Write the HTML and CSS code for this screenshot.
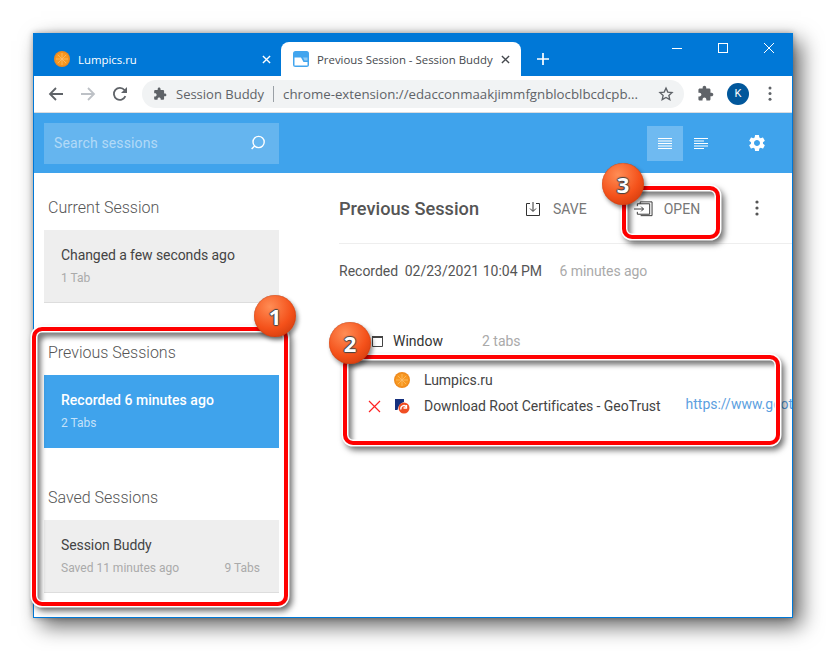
FILE: index.html
```html
<!DOCTYPE html>
<html lang="en">
<head>
    <meta charset="UTF-8">
    <title>Previous Session - Session Buddy</title>
    <link rel="stylesheet" href="styles.css">
</head>
<body>

<svg class="defs" width="0" height="0">
    <symbol id="orange" viewBox="0 0 16 16">
        <circle cx="8" cy="8" r="8" fill="#ee8a1e"/>
        <circle cx="8" cy="8" r="6.600" fill="#f8981f"/>
        <path d="M8 2v12M2 8h12M3.800 3.800l8.400 8.400M12.200 3.800l-8.400 8.400" stroke="#fcbe6c" stroke-width=".8"/>
    </symbol>
    <symbol id="puzzle" viewBox="0 0 24 24">
        <path d="M20.5 11H19V7c0-1.1-.9-2-2-2h-4V3.5C13 2.12 11.88 1 10.5 1S8 2.12 8 3.5V5H4c-1.1 0-1.99.9-1.99 2v3.8H3.5c1.49 0 2.7 1.21 2.7 2.7s-1.21 2.7-2.7 2.7H2V20c0 1.1.9 2 2 2h3.8v-1.5c0-1.49 1.21-2.7 2.7-2.7 1.49 0 2.7 1.21 2.7 2.7V22H17c1.1 0 2-.9 2-2v-4h1.5c1.38 0 2.5-1.12 2.5-2.5S21.88 11 20.5 11z"/>
    </symbol>
    <symbol id="dots" viewBox="0 0 4 16">
        <circle cx="2" cy="2" r="1.6"/><circle cx="2" cy="8" r="1.6"/><circle cx="2" cy="14" r="1.6"/>
    </symbol>
</svg>

<div class="window">
    <div class="tabstrip">
        <div class="tab">
            <svg class="favicon"><use href="#orange"/></svg>
            <span class="tab-title">Lumpics.ru</span>
            <svg class="tab-x" viewBox="0 0 10 10"><path d="M1 1l8 8M9 1l-8 8" stroke="#fff" stroke-width="1.5"/></svg>
        </div>
        <div class="tab active">
            <svg class="favicon" viewBox="0 0 16 16">
                <rect width="16" height="16" rx="2.500" fill="#42a5ee"/>
                <path d="M1.500 6.500h6.500l2.500 4.500h4v3.500h-13z" fill="#fff"/>
                <path d="M10 6.500h4.500v3h-3z" fill="#8fcbf5"/>
            </svg>
            <span class="tab-title">Previous Session - Session Buddy</span>
            <svg class="tab-x" viewBox="0 0 10 10"><path d="M1 1l8 8M9 1l-8 8" stroke="#45494e" stroke-width="1.5"/></svg>
        </div>
        <svg class="newtab" viewBox="0 0 12 12"><path d="M6 0v12M0 6h12" stroke="#fff" stroke-width="1.7"/></svg>
        <div class="caption">
            <svg viewBox="0 0 46 30"><path d="M18 15.500h10" stroke="#fff"/></svg>
            <svg viewBox="0 0 46 30"><rect x="18.500" y="10.500" width="9" height="9" fill="none" stroke="#fff"/></svg>
            <svg viewBox="0 0 46 30"><path d="M18 10l10 10M28 10l-10 10" stroke="#fff"/></svg>
        </div>
    </div>

    <div class="toolbar">
        <svg class="nav" viewBox="0 0 16 16"><path d="M15 8H2M8 2L2 8l6 6" fill="none" stroke="#5f6368" stroke-width="1.8"/></svg>
        <svg class="nav" viewBox="0 0 16 16"><path d="M1 8h13M8 2l6 6-6 6" fill="none" stroke="#bdc1c6" stroke-width="1.8"/></svg>
        <svg class="nav" viewBox="0 0 16 16"><path d="M13.400 10.200A6 6 0 1 1 12.500 4L14 5.500" fill="none" stroke="#5f6368" stroke-width="1.8"/><path d="M15 1v6H9z" fill="#5f6368"/></svg>
        <div class="omnibox">
            <svg class="omni-puzzle"><use href="#puzzle"/></svg>
            <span class="omni-name">Session Buddy</span>
            <span class="omni-sep"></span>
            <span class="omni-url">chrome-extension://edacconmaakjimmfgnblocblbcdcpb...</span>
            <svg class="omni-star" viewBox="0 0 24 24"><path d="M12 3.200l2.700 5.900 6.400.7-4.800 4.300 1.400 6.400L12 17.200l-5.700 3.300 1.400-6.400-4.800-4.300 6.400-.7z" fill="none" stroke="#5f6368" stroke-width="2"/></svg>
        </div>
        <svg class="tool-puzzle"><use href="#puzzle"/></svg>
        <div class="avatar">K</div>
        <svg class="tool-dots"><use href="#dots"/></svg>
    </div>

    <header class="app-header">
        <div class="search">
            <span class="search-text">Search sessions</span>
            <svg class="search-icon" viewBox="0 0 16 16"><circle cx="8.600" cy="7" r="5.600" fill="none" stroke="#fff" stroke-width="1.400"/><path d="M4.600 11L1.600 14" stroke="#fff" stroke-width="1.400"/></svg>
        </div>
        <div class="view-btn on">
            <svg viewBox="0 0 14 12"><path d="M0 1.500h14M0 4h14M0 6.500h14M0 9h14M0 11.500h14" stroke="#fff"/></svg>
        </div>
        <div class="view-btn">
            <svg viewBox="0 0 14 12"><path d="M0 1.500h14M0 4h10M0 6.500h14M0 9h14M0 11.500h10" stroke="#fff"/></svg>
        </div>
        <svg class="gear" viewBox="0 0 24 24"><path fill="#fff" d="M19.14 12.94c.04-.3.06-.61.06-.94 0-.32-.02-.64-.07-.94l2.03-1.58c.18-.14.23-.41.12-.61l-1.92-3.32c-.12-.22-.37-.29-.59-.22l-2.39.96c-.5-.38-1.03-.7-1.62-.94l-.36-2.54c-.04-.24-.24-.41-.48-.41h-3.84c-.24 0-.43.17-.47.41l-.36 2.54c-.59.24-1.13.57-1.62.94l-2.39-.96c-.22-.08-.47 0-.59.22L2.74 8.87c-.12.21-.08.47.12.61l2.03 1.58c-.05.3-.09.63-.09.94s.02.64.07.94l-2.03 1.58c-.18.14-.23.41-.12.61l1.92 3.32c.12.22.37.29.59.22l2.39-.96c.5.38 1.03.7 1.62.94l.36 2.54c.05.24.24.41.48.41h3.84c.24 0 .44-.17.47-.41l.36-2.54c.59-.24 1.13-.56 1.62-.94l2.39.96c.22.08.47 0 .59-.22l1.92-3.32c.12-.22.07-.47-.12-.61l-2.01-1.58zM12 15.600c-1.98 0-3.6-1.62-3.6-3.6s1.62-3.6 3.6-3.6 3.6 1.62 3.6 3.6-1.62 3.6-3.6 3.6z"/></svg>
    </header>

    <div class="app-body">
        <aside class="sidebar">
            <h3 class="side-title">Current Session</h3>
            <div class="card">
                <div class="card-name">Changed a few seconds ago</div>
                <div class="card-meta"><span>1 Tab</span></div>
            </div>
            <h3 class="side-title">Previous Sessions</h3>
            <div class="card selected">
                <div class="card-name">Recorded 6 minutes ago</div>
                <div class="card-meta"><span>2 Tabs</span></div>
            </div>
            <h3 class="side-title">Saved Sessions</h3>
            <div class="card">
                <div class="card-name">Session Buddy</div>
                <div class="card-meta"><span>Saved 11 minutes ago</span><span>9 Tabs</span></div>
            </div>
        </aside>

        <main class="main">
            <div class="main-head">
                <h2 class="main-title">Previous Session</h2>
                <div class="action save">
                    <svg viewBox="0 0 16 16"><path d="M5 2.500H1.500v12h13v-12H11M8 1v9M5 7.500L8 10.500l3-3" fill="none" stroke="#333"/></svg>
                    <span>SAVE</span>
                </div>
                <div class="action open">
                    <svg viewBox="0 0 20 16"><path d="M3.500 5V2.500h13v11h-13V11M6.500 2.500V.5h12.500v14.500H7M0 8h10M7.500 5.500L10 8l-2.500 2.500" fill="none" stroke="#333"/></svg>
                    <span>OPEN</span>
                </div>
                <svg class="main-dots"><use href="#dots"/></svg>
            </div>
            <div class="recorded">
                <span class="rec-label">Recorded</span>
                <span class="rec-date">02/23/2021 10:04 PM</span>
                <span class="rec-ago">6 minutes ago</span>
            </div>
            <div class="win-row">
                <svg class="win-icon" viewBox="0 0 11 11"><path d="M.5 1h10v9.500H.5z" fill="none" stroke="#444"/><path d="M0 1h11" stroke="#444" stroke-width="2"/></svg>
                <span class="win-name">Window</span>
                <span class="win-count">2 tabs</span>
            </div>
            <div class="tab-row">
                <span class="tab-del"></span>
                <svg class="row-icon"><use href="#orange"/></svg>
                <span class="row-title">Lumpics.ru</span>
            </div>
            <div class="tab-row">
                <svg class="tab-del" viewBox="0 0 13 13"><path d="M1 1l11 11M12 1L1 12" stroke="#f22" stroke-width="1.200"/></svg>
                <svg class="row-icon" viewBox="0 0 16 16">
                    <path d="M1 1h9v3Q5 5 3.500 12H1z" fill="#16307e"/>
                    <circle cx="10" cy="10" r="5.500" fill="#f04e23"/>
                    <path d="M7 11.500a3 3 0 0 1 5-3M12.500 7v3h-3" fill="none" stroke="#fff" stroke-width="1.300"/>
                </svg>
                <span class="row-title">Download Root Certificates - GeoTrust</span>
                <span class="row-url">https://www.geot</span>
            </div>
        </main>
    </div>
</div>

<!-- red callouts drawn over the screenshot -->
<div class="mark mark-1"></div>
<div class="mark mark-2"></div>
<div class="mark mark-3"></div>
<div class="badge badge-1">1</div>
<div class="badge badge-2">2</div>
<div class="badge badge-3">3</div>

</body>
</html>
```

FILE: styles.css
```css
* {
    margin: 0;
    padding: 0;
    box-sizing: border-box;
}

html, body {
    height: 651px;
    overflow: hidden;
}

body {
    background: #fff;
    padding: 33px 33px 33px 33px;
    position: relative;
    font-family: Roboto, sans-serif;
}

.defs {
    position: absolute;
}

svg {
    display: block;
    flex: none;
}

.window {
    width: 760px;
    height: 585px;
    background: #fff;
    border: solid #0078d7;
    border-width: 0 1px 1px 1px;
    box-shadow: 8px 8px 20px rgba(0, 0, 0, 0.6), 0 0 6px rgba(0, 0, 0, 0.3);
    overflow: hidden;
    display: flex;
    flex-direction: column;
}

/* chrome tabs */
.tabstrip {
    height: 43px;
    flex: none;
    background: #0078d7;
    display: flex;
    align-items: flex-end;
    position: relative;
}

.tab {
    height: 34px;
    display: flex;
    align-items: center;
    font-family: "Open Sans", sans-serif;
    font-size: 11.4px;
    color: #fff;
    width: 247px;
    padding: 0 10px 0 20px;
}

.tab.active {
    background: #fff;
    color: #45494e;
    width: 240px;
    border-radius: 8px 8px 0 0;
    padding: 0 11px 0 12px;
}

.favicon {
    width: 16px;
    height: 16px;
    margin-right: 8px;
}

.tab-title {
    flex: 1;
    white-space: nowrap;
}

.tab-x {
    width: 9px;
    height: 9px;
}

.newtab {
    width: 12px;
    height: 12px;
    margin: 0 0 11px 16px;
}

.caption {
    position: absolute;
    right: 0;
    top: 0;
    display: flex;
}

.caption svg {
    width: 46px;
    height: 30px;
}

/* address bar row */
.toolbar {
    height: 37px;
    flex: none;
    background: #fff;
    border-bottom: 1px solid #dadce0;
    display: flex;
    align-items: center;
    padding: 0 0 1px 14px;
}

.nav {
    width: 16px;
    height: 16px;
    margin-right: 16px;
}

.omnibox {
    width: 542px;
    height: 28px;
    margin-left: -2px;
    background: #f1f3f4;
    border-radius: 14px;
    display: flex;
    align-items: center;
    padding: 0 10px 0 11px;
    font-family: "Open Sans", sans-serif;
    font-size: 13px;
    color: #5f6368;
    white-space: nowrap;
}

.omni-puzzle {
    width: 14px;
    height: 14px;
    fill: #5f6368;
    margin-right: 9px;
}

.omni-sep {
    width: 1px;
    height: 16px;
    background: #9aa0a6;
    margin: 0 9px 0 9px;
}

.omni-url {
    flex: 1;
    font-size: 13.25px;
}

.omni-star {
    width: 16px;
    height: 16px;
}

.tool-puzzle {
    width: 17px;
    height: 17px;
    fill: #5f6368;
    margin-left: 13px;
}

.avatar {
    width: 22px;
    height: 22px;
    border-radius: 50%;
    background: #01579b;
    color: #fff;
    font-size: 11px;
    line-height: 22px;
    text-align: center;
    margin-left: 13px;
}

.tool-dots {
    width: 4px;
    height: 15px;
    fill: #5f6368;
    margin-left: 19px;
}

/* session buddy */
.app-header {
    height: 60px;
    flex: none;
    background: #3fa3ec;
    display: flex;
    align-items: center;
    padding-left: 10px;
}

.search {
    width: 235px;
    height: 41px;
    background: rgba(255, 255, 255, 0.2);
    display: flex;
    align-items: center;
    justify-content: space-between;
    padding: 0 13px 0 10px;
    font-size: 14px;
    letter-spacing: 0.13px;
    color: rgba(255, 255, 255, 0.5);
}

.search-icon {
    width: 16px;
    height: 16px;
}

.view-btn {
    width: 36px;
    height: 35px;
    display: flex;
    align-items: center;
    justify-content: center;
}

.view-btn.on {
    background: rgba(255, 255, 255, 0.25);
    margin-left: 368px;
}

.view-btn svg {
    width: 14px;
    height: 12px;
}

.gear {
    width: 20px;
    height: 20px;
    margin-left: 28px;
}

.app-body {
    flex: 1;
    display: flex;
    min-height: 0;
}

.sidebar {
    width: 245px;
    flex: none;
    padding-left: 10px;
}

.side-title {
    font-size: 16px;
    font-weight: 300;
    color: #555;
    line-height: 20px;
    padding: 1px 0 0 4px;
    height: 21px;
    margin: 39px 0 12px;
}

.side-title:first-child {
    margin-top: 24px;
}

.card {
    height: 73px;
    background: #eee;
    border-bottom: 1px solid #ddd;
    padding: 16px 19px 0 17px;
}

.card.selected {
    background: #3fa3ec;
    border-bottom: 0;
    color: #fff;
}

.card-name {
    font-size: 14px;
    letter-spacing: -0.08px;
    line-height: 18px;
    color: #444;
}

.selected .card-name {
    color: #fff;
    font-weight: 500;
    letter-spacing: 0.03px;
}

.card-meta {
    display: flex;
    justify-content: space-between;
    font-size: 12px;
    line-height: 16px;
    margin-top: 6px;
    color: #aaa;
}

.selected .card-meta {
    color: rgba(255, 255, 255, 0.7);
}

.main {
    flex: 1;
    min-width: 0;
    padding-left: 60px;
    overflow: hidden;
}

.main-head {
    height: 71px;
    border-bottom: 1px solid #eee;
    display: flex;
    align-items: center;
    white-space: nowrap;
}

.main-title {
    font-size: 18.2px;
    font-weight: 500;
    color: #555;
    width: 186px;
}

.action {
    display: flex;
    align-items: center;
    margin-top: 1px;
    font-size: 14px;
    color: #777;
}

.action svg {
    width: 16px;
    height: 16px;
    margin-right: 12px;
}

.action.open {
    margin-left: 47px;
}

.action.open svg {
    width: 19px;
    height: 16px;
    margin-right: 11px;
}

.main-dots {
    width: 4px;
    height: 16px;
    fill: #555;
    margin-left: 55px;
}

.recorded {
    font-size: 14px;
    line-height: 18px;
    margin-top: 18px;
    color: #555;
    white-space: nowrap;
}

.rec-date {
    margin-left: 3px;
}

.rec-ago {
    color: #aaa;
    margin-left: 14px;
    letter-spacing: -0.08px;
}

.win-row {
    display: flex;
    align-items: center;
    height: 20px;
    margin-top: 51px;
    font-size: 14px;
    color: #333;
    white-space: nowrap;
}

.win-icon {
    width: 11px;
    height: 11px;
    margin: 0 10px 0 33px;
}

.win-count {
    color: #aaa;
    margin-left: 39px;
}

.tab-row {
    display: flex;
    align-items: center;
    height: 26px;
    font-size: 14px;
    color: #444;
    white-space: nowrap;
}

.win-row + .tab-row {
    margin-top: 16px;
}

.tab-del {
    width: 13px;
    height: 13px;
    margin-left: 29px;
    flex: none;
}

.row-icon {
    width: 16px;
    height: 16px;
    margin: 0 14px 0 13px;
}

.row-title {
    letter-spacing: -0.05px;
}

.row-url {
    color: #5c9fe0;
    margin: -4px 0 0 25px;
}

/* callouts */
.mark {
    position: absolute;
    border: 4px solid #f00;
    border-radius: 10px;
    box-shadow: 0 0 0 1.5px #fff, 3px 4px 6px 1px rgba(0, 0, 0, 0.6), inset 0 0 0 1.5px #fff, inset 5px 6px 5px rgba(0, 0, 0, 0.5);
}

.mark-1 {
    left: 32px;
    top: 327px;
    width: 256px;
    height: 279px;
}

.mark-2 {
    left: 343px;
    top: 355px;
    width: 437px;
    height: 90px;
}

.mark-3 {
    left: 622px;
    top: 186px;
    width: 98px;
    height: 53px;
}

.badge {
    position: absolute;
    width: 42px;
    height: 42px;
    border-radius: 50%;
    background: radial-gradient(circle at 38% 28%, #ff8d55, #f4511a 55%, #c8360a 95%);
    box-shadow: 2px 3px 4px rgba(0, 0, 0, 0.45), inset 0 0 1px #8f2a08;
    color: #fff;
    font-family: "Open Sans", sans-serif;
    font-weight: 700;
    font-size: 22px;
    line-height: 42px;
    text-align: center;
    text-shadow: -1px 0 1px #444, 1px 0 1px #444, 0 -1px 1px #444, 0 1px 1px #444;
}

.badge-1 {
    left: 254px;
    top: 295px;
}

.badge-2 {
    left: 329px;
    top: 322px;
}

.badge-3 {
    left: 602px;
    top: 163px;
}
```
